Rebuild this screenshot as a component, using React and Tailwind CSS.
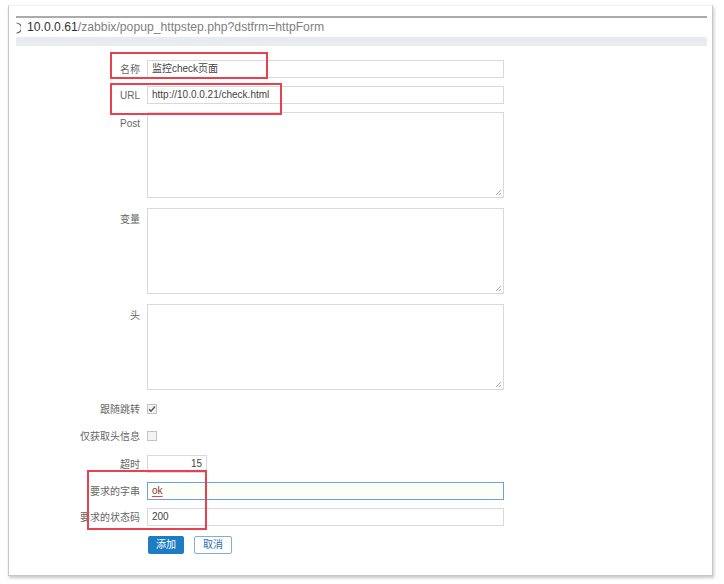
import React from "react";

const cjk = { fontFamily: '"Liberation Sans", "Noto Sans CJK SC", sans-serif' };

const Label = ({ children, top = false }) => (
  <div
    className={`w-[131px] shrink-0 text-right text-[10px] text-[#666] ${
      top ? "pt-[4px]" : "self-center"
    }`}
  >
    {children}
  </div>
);

const Row = ({ label, top, className = "", children }) => (
  <div className={`flex ${className}`}>
    <Label top={top}>{label}</Label>
    <div className="ml-[7px] flex items-center">{children}</div>
  </div>
);

const Field = ({ value, width = "w-[357px]", align = "text-left" }) => (
  <div
    className={`${width} h-[18px] border border-[#d9d9d9] bg-white px-[4px] text-[10px] leading-[16px] text-[#444] ${align}`}
  >
    {value}
  </div>
);

const Area = () => (
  <div className="relative w-[357px] h-[86px] border border-[#d9d9d9] bg-white">
    <svg
      className="absolute right-[1px] bottom-[1px]"
      width="7"
      height="7"
      viewBox="0 0 7 7"
    >
      <path d="M6 1 L1 6 M6 4 L4 6" stroke="#aaa" strokeWidth="1" />
    </svg>
  </div>
);

const Check = ({ checked }) => (
  <div className="w-[10px] h-[10px] border border-[#c4c4c4] bg-[#f3f3f3] flex items-center justify-center">
    {checked && (
      <svg width="8" height="8" viewBox="0 0 8 8">
        <path d="M1 4.2 L3 6.3 L7 1.5" stroke="#555" strokeWidth="1.4" fill="none" />
      </svg>
    )}
  </div>
);

export default function App() {
  return (
    <div className="relative w-[724px] h-[584px] bg-white overflow-hidden" style={cjk}>
      <div className="pt-[5px] pl-[8px]">
        <div className="w-[705px] h-[571px] border-l border-r border-b border-t border-[#c8c8c8] border-t-[#f2f2f2] shadow-[1px_2px_3px_rgba(0,0,0,0.22)] bg-white">
          <div className="pl-[7px] pr-[5px] pt-[10px]">
            <div className="h-[2px] bg-[#ababab]" />
            <div className="h-[19px] flex items-center text-[12.2px] leading-none">
              <svg width="5" height="12" viewBox="0 0 5 12" className="mr-[6px]">
                <path d="M0.5 1 A5 5 0 0 1 0.5 11" stroke="#666" strokeWidth="1.2" fill="none" />
              </svg>
              <span className="text-[#333]">10.0.0.61</span>
              <span className="text-[#808080]">/zabbix/popup_httpstep.php?dstfrm=httpForm</span>
            </div>
            <div className="h-[9px] bg-[#e8ecf0]" />
          </div>

          <div className="pt-[14px]">
            <Row label="名称">
              <Field value="监控check页面" />
            </Row>
            <Row label="URL" className="mt-[8px]">
              <Field value="http://10.0.0.21/check.html" />
            </Row>
            <Row label="Post" top className="mt-[8px]">
              <Area />
            </Row>
            <Row label="变量" top className="mt-[10px]">
              <Area />
            </Row>
            <Row label="头" top className="mt-[10px]">
              <Area />
            </Row>
            <Row label="跟随跳转" className="mt-[10px] h-[18px]">
              <Check checked />
            </Row>
            <Row label="仅获取头信息" className="mt-[9px] h-[18px]">
              <Check />
            </Row>
            <Row label="超时" className="mt-[10px]">
              <Field value="15" width="w-[60px]" align="text-right" />
            </Row>
            <Row label="要求的字串" className="mt-[9px]">
              <div className="w-[357px] h-[18px] border border-[#6aa3d5] bg-[#fefef9] px-[4px] text-[10px] leading-[16px]">
                <span className="text-[#8a3a3a] underline decoration-[#e04848] underline-offset-2">ok</span>
              </div>
            </Row>
            <Row label="要求的状态码" className="mt-[8px]">
              <Field value="200" />
            </Row>
            <div className="mt-[10px] flex pl-[139px] gap-[10px]">
              <div className="w-[36px] h-[18px] rounded-[2px] bg-[#1d7dc3] text-white text-[10px] leading-[18px] text-center">
                添加
              </div>
              <div className="w-[38px] h-[18px] rounded-[2px] border border-[#7faed6] bg-white text-[#2a6fae] text-[10px] leading-[16px] text-center">
                取消
              </div>
            </div>
          </div>
        </div>
      </div>

      <div className="absolute left-[110px] top-[52px] w-[158px] h-[27px] border-2 border-[#e8404e]" />
      <div className="absolute left-[110px] top-[83px] w-[172px] h-[32px] border-2 border-[#e8404e]" />
      <div className="absolute left-[87px] top-[470px] w-[120px] h-[60px] border-2 border-[#e8404e]" />
    </div>
  );
}
